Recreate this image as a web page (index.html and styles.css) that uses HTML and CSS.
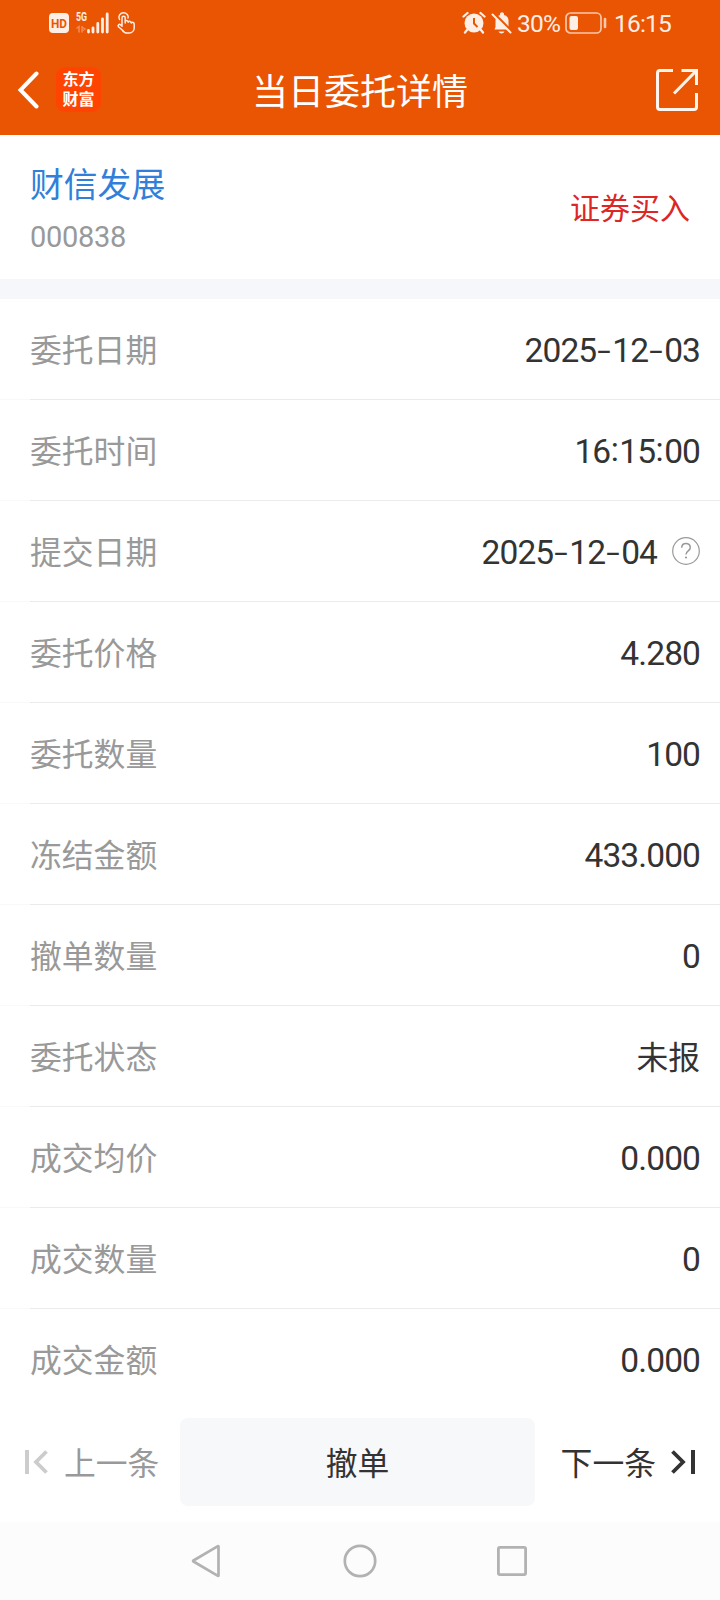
FILE: index.html
```html
<!DOCTYPE html>
<html lang="zh-CN">
<head>
<meta charset="utf-8">
<title>当日委托详情</title>
<link rel="stylesheet" href="styles.css">
</head>
<body>
<div class="screen">
  <header class="header">
    <div class="status">
      <svg class="hd" width="20" height="20" viewBox="0 0 20 20"><rect width="20" height="20" rx="4" fill="#fdeee6"/><text x="10" y="14.6" text-anchor="middle" textLength="16" lengthAdjust="spacingAndGlyphs" class="hd-text">HD</text></svg>
      <svg class="signal" width="34" height="24" viewBox="0 0 34 24">
        <text x="0" y="10" textLength="11" lengthAdjust="spacingAndGlyphs" class="net-text">5G</text>
        <path d="M.5 17.5 3 15.5v6M6 15v6.5M6 16l3 2-3 2" fill="none" stroke="#f38a55" stroke-width="1.5"/>
        <path d="M12.5 19.5v1.5M17 17v4M21.8 12.5V21M26.500 8v13M31.200 3v18" stroke="#fdeee6" stroke-width="2.800" stroke-linecap="round"/>
      </svg>
      <svg class="hand" width="21" height="24" viewBox="0 0 21 24" fill="none" stroke="#fdeee6" stroke-width="1.500" stroke-linecap="round" stroke-linejoin="round"><path d="M3.500 8.500C1.500 5 4.500 1.800 7.500 1.800S13 4.500 12 7"/><path d="M6 14.500V6.800c0-2.200 3.200-2.200 3.200 0V12M9.200 10.500c.8-1.500 3-1 3 .8M12.200 11c1-1.200 3-.7 3 1M15.200 12c1-1.200 3-.7 3 1v3.500c0 3-2 5.500-5 5.500h-2c-3 0-4-1.500-5-3L2.500 15.800c-1.300-1.700.8-3 2-2L6 15.200"/></svg>
      <span class="grow"></span>
      <svg class="alarm" width="24" height="24" viewBox="0 0 24 24"><circle cx="12" cy="12" r="9.500" fill="#fdeee6"/><path d="M1.500 5.500 5.500 2M22.500 5.500 18.500 2M5 19l-2 2.500M19 19l2 2.500" stroke="#fdeee6" stroke-width="2.300" stroke-linecap="round"/><path d="M12 7v5.500l3.500 3.500" fill="none" stroke="#ea5504" stroke-width="2"/></svg>
      <svg class="bell" width="22" height="24" viewBox="0 0 22 24"><path d="M3.500 18.500h15L17.500 16V9.500C17.500 6 15 4.500 13 4V2.500Q11 0 9 2.500V4C6 5 4.500 7 4.500 9.500V16zM7.500 20.500h6c-1 2.600-5 2.600-6 0z" fill="#fdeee6"/><path d="M2.500 2 21 20.500" stroke="#ea5504" stroke-width="2.500"/><path d="M1.500 3.500 19.500 21.500" stroke="#fdeee6" stroke-width="2" stroke-linecap="round"/></svg>
      <span class="percent">30%</span>
      <svg class="battery" width="42" height="22" viewBox="0 0 42 22"><rect x="1" y="1" width="35" height="20" rx="4.500" fill="none" stroke="#f9c7ab" stroke-width="1.700"/><rect x="4.500" y="4" width="8.500" height="14" rx="2" fill="#fdeee6"/><path d="M40 7v8" stroke="#f9c7ab" stroke-width="2.600" stroke-linecap="round"/></svg>
      <span class="clock">16:15</span>
    </div>
    <div class="titlebar">
      <div class="title-side">
        <svg class="back" width="22" height="38" viewBox="0 0 22 38"><path d="M19.500 2.500 3.500 19l16 16.500" fill="none" stroke="#fff" stroke-width="4" stroke-linecap="round"/></svg>
        <div class="logo">东方<br>财富</div>
      </div>
      <h1 class="title">当日委托详情</h1>
      <div class="title-side end">
        <svg width="42" height="42" viewBox="0 0 42 42" fill="none" stroke="#fff5ee" stroke-width="3"><path d="M17 1.500H4Q1.500 1.500 1.500 4v34q0 2.500 2.500 2.500h34q2.500 0 2.500-2.500V24M25.500 1.500h15V16M40 2 18 24.500"/></svg>
      </div>
    </div>
  </header>

  <section class="stock">
    <div class="stock-id">
      <div class="stock-name">财信发展</div>
      <div class="stock-code">000838</div>
    </div>
    <div class="side-tag">证券买入</div>
  </section>

  <main class="rows">
    <div class="row"><span class="label">委托日期</span><span class="value">2025<i class="dash">-</i>12<i class="dash">-</i>03</span></div>
    <div class="row"><span class="label">委托时间</span><span class="value">16<i class="colon">:</i>15<i class="colon">:</i>00</span></div>
    <div class="row"><span class="label">提交日期</span><span class="value">2025<i class="dash">-</i>12<i class="dash">-</i>04</span><svg class="help" width="28" height="28" viewBox="0 0 28 28" fill="none" stroke="#999"><circle cx="14" cy="14" r="13.300" stroke-width="1.200"/><path d="M9.700 10.800C9.700 5 18.300 5 18.300 10.500c0 3.500-4.300 3.200-4.300 7" stroke-width="1.500"/><circle cx="14" cy="20.500" r="1.100" fill="#999" stroke="none"/></svg></div>
    <div class="row"><span class="label">委托价格</span><span class="value">4.280</span></div>
    <div class="row"><span class="label">委托数量</span><span class="value">100</span></div>
    <div class="row"><span class="label">冻结金额</span><span class="value">433.000</span></div>
    <div class="row"><span class="label">撤单数量</span><span class="value">0</span></div>
    <div class="row"><span class="label">委托状态</span><span class="value cjk">未报</span></div>
    <div class="row"><span class="label">成交均价</span><span class="value">0.000</span></div>
    <div class="row"><span class="label">成交数量</span><span class="value">0</span></div>
    <div class="row"><span class="label">成交金额</span><span class="value">0.000</span></div>
  </main>

  <footer class="actions">
    <div class="prev">
      <svg width="24" height="24" viewBox="0 0 24 24" fill="none" stroke="#ccc"><path d="M2 0v24" stroke-width="4"/><path d="M21.500 1.500 11 12l10.500 10.500" stroke-width="3.800"/></svg>
      <span>上一条</span>
    </div>
    <button class="cancel"><span>撤单</span></button>
    <div class="next">
      <span>下一条</span>
      <svg width="24" height="24" viewBox="0 0 24 24" fill="none" stroke="#333"><path d="M22 0v24" stroke-width="4"/><path d="M1.500 1.500 12 12 1.500 22.500" stroke-width="3.800"/></svg>
    </div>
  </footer>

  <nav class="sysnav">
    <svg width="30" height="34" viewBox="0 0 30 34"><path d="M27.500 2.500v29q0 .5-.6.300L2.500 17.500q-.8-.5 0-1L26.900 2.200q.6-.2.600.3z" fill="none" stroke="#b2b2b2" stroke-width="2.700" stroke-linejoin="round"/></svg>
    <svg class="home" width="34" height="34" viewBox="0 0 34 34"><circle cx="17" cy="17" r="15.200" fill="none" stroke="#b2b2b2" stroke-width="2.700"/></svg>
    <svg width="30" height="30" viewBox="0 0 30 30"><rect x="1.400" y="1.400" width="27.200" height="27.200" rx="1.500" fill="none" stroke="#b2b2b2" stroke-width="2.800"/></svg>
  </nav>
</div>
</body>
</html>
```
FILE: styles.css
```css
* { box-sizing: border-box; }
body {
  margin: 0;
  background: #fff;
  font-family: "Noto Sans CJK SC", sans-serif;
  color: #333;
}
svg { display: block; flex: none; }
.screen { width: 720px; height: 1600px; display: flex; flex-direction: column; overflow: hidden; }

.header { height: 135px; background: #ea5504; color: #fff; }
.status { height: 46px; display: flex; align-items: center; padding: 0 49px 0 49px; color: #fdeee6; font-family: Roboto, sans-serif; font-size: 24.5px; }
.hd-text { font: 700 13px Roboto, sans-serif; fill: #ea5504; }
.net-text { font: 700 12px Roboto, sans-serif; fill: #fdeee6; }
.signal { margin-left: 7px; }
.hand { margin-left: 6px; }
.grow { flex: 1; }
.bell { margin-left: 5px; }
.percent { width: 44px; margin-left: 4px; padding-top: 1px; letter-spacing: -0.8px; white-space: nowrap; }
.battery { margin-left: 4px; }
.clock { width: 57px; margin-left: 7px; padding-top: 1px; letter-spacing: -0.8px; white-space: nowrap; }
.titlebar { height: 87px; display: flex; align-items: center; padding: 0 22px 0 17px; }
.title-side { width: 120px; display: flex; align-items: center; }
.title-side.end { justify-content: flex-end; }
.logo { width: 45px; height: 45px; margin-left: 17px; padding: 2px 0 0 0; border-radius: 9px; background: #ff4300; text-align: center; font-size: 16px; line-height: 19.5px; font-weight: 700; }
.title { flex: 1; margin: 0; padding: 0 0 2px 5px; text-align: center; font-size: 36px; line-height: 44px; font-weight: 400; }

.stock { height: 164px; border-bottom: 20px solid #f6f7fa; display: flex; align-items: center; justify-content: space-between; padding: 0 30px; }
.stock-name { padding-top: 4px; font-size: 33.800px; line-height: 50px; color: #317fd9; }
.stock-code { margin-top: 6px; font-family: Roboto, sans-serif; font-size: 29px; line-height: 46px; color: #999; letter-spacing: -0.3px; }
.side-tag { padding-bottom: 2px; font-size: 30px; line-height: 44px; color: #dd2626; }

.row { height: 101px; display: flex; align-items: center; padding: 0 20px 0 30px; background: linear-gradient(#ebebeb, #ebebeb) 30px 100% / 100% 1px no-repeat, linear-gradient(#f9f9f9, #f9f9f9) 0 100% / 100% 1px no-repeat; }
.row:last-child { background: none; }
.label { flex: 1; padding-bottom: 4px; font-size: 31.800px; line-height: 46px; color: #999; }
.value { padding-top: 2px; font-family: Roboto, sans-serif; font-size: 33.500px; line-height: 46px; letter-spacing: -0.9px; }
.value.cjk { padding: 0 0 4px; font-family: "Noto Sans CJK SC", sans-serif; font-size: 31.800px; letter-spacing: 0; }
.dash, .colon { display: inline-block; font-style: normal; text-align: center; letter-spacing: 0; }
.dash { width: 16px; transform: scale(1.450, 0.900); }
.colon { width: 9px; transform: translateY(-2px); }
.help { margin-left: 15px; margin-bottom: 1px; }

.actions { height: 112px; display: flex; align-items: center; padding: 0 25px 8px 25px; font-size: 31.800px; line-height: 46px; }
.actions span { padding-bottom: 3px; }
.prev { width: 155px; display: flex; align-items: center; gap: 15px; color: #999; }
.cancel { width: 355px; height: 88px; border: 0; border-radius: 8px; background: #f7f8fa; color: #333; font: inherit; padding: 0; display: flex; align-items: center; justify-content: center; }
.next { flex: 1; display: flex; align-items: center; justify-content: flex-end; gap: 15px; }

.sysnav { height: 78px; background: #fcfcfc; display: flex; align-items: center; justify-content: space-between; padding: 0 193px 0 191px; }
.home { margin-left: 2px; }
```
